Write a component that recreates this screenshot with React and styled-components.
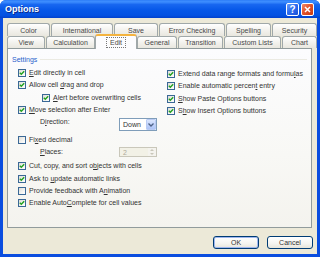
import React from 'react';
import styled, { createGlobalStyle } from 'styled-components';

const GlobalStyle = createGlobalStyle`
  body {
    margin: 0;
    font-family: "Liberation Sans", Arial, sans-serif;
    background: #ffffff;
  }
`;

const Window = styled.div`
  width: 320px;
  height: 257px;
  display: flex;
  flex-direction: column;
  background: #0a4ddf;
  border-radius: 6px 6px 0 0;
  overflow: hidden;
`;

const TitleBar = styled.div`
  height: 18px;
  flex: none;
  display: flex;
  align-items: center;
  justify-content: space-between;
  padding: 0 5px 0 5px;
  background: linear-gradient(
    to bottom,
    #2d7df7 0%,
    #3f8fff 10%,
    #1867f0 25%,
    #0758e8 55%,
    #0452e2 85%,
    #0342cc 100%
  );
`;

const TitleText = styled.span`
  color: #ffffff;
  font-weight: bold;
  font-size: 9px;
  text-shadow: 1px 1px 0 #0a2a8a;
`;

const TitleButtons = styled.div`
  display: flex;
  gap: 2px;
  margin-right: 1px;
`;

const TitleButton = styled.div`
  width: 13px;
  height: 13px;
  box-sizing: border-box;
  border: 1px solid #ffffff;
  border-radius: 2px;
  display: flex;
  align-items: center;
  justify-content: center;
  color: #ffffff;
  font-weight: bold;
  font-size: 10px;
  background: ${p =>
    p.$variant === 'close'
      ? 'linear-gradient(135deg, #f08a6a 0%, #e2542d 45%, #c8380f 100%)'
      : 'linear-gradient(135deg, #6d9ef8 0%, #2f6ef0 45%, #1a52d8 100%)'};
`;

const Body = styled.div`
  flex: 1;
  margin: 0 3px 3px 3px;
  background: #ece9d8;
  display: flex;
  flex-direction: column;
  padding: 5px 5px 5px 4px;
`;

const TabStrip = styled.div`
  display: flex;
  flex-direction: column;
`;

const TabRow = styled.div`
  display: flex;
  align-items: flex-end;
  height: ${p => p.$h}px;
`;

const Tab = styled.div`
  width: ${p => p.$w}px;
  height: 100%;
  box-sizing: border-box;
  flex: none;
  display: flex;
  align-items: center;
  justify-content: center;
  font-size: 7px;
  color: #484848;
  border: 1px solid #a0a8a9;
  border-bottom: none;
  border-radius: 3px 3px 0 0;
  margin-right: 1px;
  background: linear-gradient(to bottom, #ffffff 0%, #f3f2ee 50%, #e9e7df 100%);

  &:last-child {
    margin-right: 0;
  }
`;

const ActiveTab = styled(Tab)`
  position: relative;
  z-index: 2;
  height: 15px;
  margin: 0 0 -1px -1px;
  width: ${p => p.$w + 1}px;
  border-top: 2px solid #f4b33f;
  background: #fcfcfe;
  padding-bottom: 1px;
`;

const FocusText = styled.span`
  outline: 1px dotted #777777;
  outline-offset: 0;
  padding: 0 3px;
  line-height: 9px;
`;

const Panel = styled.div`
  height: 180px;
  box-sizing: border-box;
  border: 1px solid #919b9c;
  background: linear-gradient(to bottom, #fcfcfe 0%, #f8f8f5 60%, #f4f3ee 100%);
  padding: 5px 4px 0 4px;
  position: relative;
  z-index: 1;
`;

const GroupHeader = styled.div`
  display: flex;
  align-items: center;
  gap: 3px;
  height: 10px;
  font-size: 7px;
  color: #2a5fcc;
`;

const GroupLine = styled.div`
  flex: 1;
  height: 1px;
  background: #ebeae2;
`;

const Columns = styled.div`
  display: grid;
  grid-template-columns: 149px 1fr;
  margin: 3px 0 0 6px;
`;

const Column = styled.div`
  display: flex;
  flex-direction: column;
`;

const Row = styled.div`
  display: flex;
  align-items: ${p => (p.$top ? 'flex-start' : 'center')};
  height: ${p => p.$h}px;
  padding-left: ${p => p.$indent || 0}px;
  font-size: 7px;
  color: #333333;
  white-space: nowrap;
`;

const Text = styled.span`
  line-height: 12px;
`;

const Key = styled.span`
  text-decoration: underline;
`;

const Box = styled.span`
  width: 8px;
  height: 8px;
  box-sizing: border-box;
  flex: none;
  border: 1px solid #3a6896;
  background: linear-gradient(135deg, #dcdcd7 0%, #f4f4f1 60%, #ffffff 100%);
  margin-right: 3px;
  display: flex;
  align-items: center;
  justify-content: center;
`;

const FieldLabel = styled.span`
  width: ${p => p.$w}px;
  flex: none;
  line-height: 12px;
`;

const Select = styled.div`
  width: 38px;
  height: 13px;
  box-sizing: border-box;
  margin-top: 2px;
  border: 1px solid #7f9db9;
  background: #ffffff;
  display: flex;
  align-items: center;
  justify-content: space-between;
  padding-left: 3px;
  font-size: 7px;
  color: #333333;
`;

const DropButton = styled.span`
  width: 10px;
  height: 11px;
  box-sizing: border-box;
  border: 1px solid #b9cbf3;
  border-radius: 1px;
  background: linear-gradient(to bottom, #dbe6fd 0%, #bdd0fb 60%, #aec4f6 100%);
  display: flex;
  align-items: center;
  justify-content: center;
`;

const Spinner = styled.div`
  width: 38px;
  height: 10px;
  box-sizing: border-box;
  margin-top: 1px;
  border: 1px solid #c9c7ba;
  background: #f2f1e6;
  display: flex;
  align-items: center;
  justify-content: space-between;
  padding-left: 3px;
  font-size: 7px;
  color: #aca899;
`;

const SpinButtons = styled.span`
  width: 8px;
  height: 8px;
  display: flex;
  flex-direction: column;
  justify-content: space-between;
`;

const SpinHalf = styled.span`
  height: 4px;
  background: #f4f3ee;
  display: flex;
  align-items: center;
  justify-content: center;
`;

const Footer = styled.div`
  display: flex;
  justify-content: flex-end;
  gap: 8px;
  margin: 8px -1px 0 0;
`;

const Button = styled.div`
  width: 46px;
  height: 13px;
  box-sizing: border-box;
  border: 1px solid #003c74;
  border-radius: 3px;
  display: flex;
  align-items: center;
  justify-content: center;
  font-size: 7px;
  color: #333333;
  background: linear-gradient(to bottom, #ffffff 0%, #f4f4f0 60%, #e6e4da 100%);
  box-shadow: ${p => (p.$default ? 'inset 0 0 0 1px #9fb6ee' : 'none')};
`;

const Label = ({ text }) => {
  const i = text.indexOf('&');
  if (i < 0) return <Text>{text}</Text>;
  return (
    <Text>
      {text.slice(0, i)}
      <Key>{text[i + 1]}</Key>
      {text.slice(i + 2)}
    </Text>
  );
};

const CheckMark = () => (
  <svg width="6" height="6" viewBox="0 0 6 6">
    <path d="M0.8 2.8 L2.3 4.3 L5.2 1.2" fill="none" stroke="#21a121" strokeWidth="1.4" />
  </svg>
);

const Check = ({ label, checked, h, indent }) => (
  <Row $h={h} $indent={indent}>
    <Box>{checked && <CheckMark />}</Box>
    <Label text={label} />
  </Row>
);

const row1 = [
  ['Color', 43],
  ['International', 62],
  ['Save', 44],
  ['Error Checking', 66],
  ['Spelling', 45],
  ['Security', 45]
];

const row2 = [
  ['View', 38],
  ['Calculation', 49],
  ['Edit', 41],
  ['General', 40],
  ['Transition', 45],
  ['Custom Lists', 57],
  ['Chart', 35]
];

const App = () => {
  return (
    <>
      <GlobalStyle />
      <Window>
        <TitleBar>
          <TitleText>Options</TitleText>
          <TitleButtons>
            <TitleButton $variant="help">?</TitleButton>
            <TitleButton $variant="close">
              <svg width="7" height="7" viewBox="0 0 7 7">
                <path d="M1 1 L6 6 M6 1 L1 6" stroke="#ffffff" strokeWidth="1.5" />
              </svg>
            </TitleButton>
          </TitleButtons>
        </TitleBar>
        <Body>
          <TabStrip>
            <TabRow $h={13}>
              {row1.map(([name, w]) => (
                <Tab key={name} $w={w}>
                  {name}
                </Tab>
              ))}
            </TabRow>
            <TabRow $h={12}>
              {row2.map(([name, w]) =>
                name === 'Edit' ? (
                  <ActiveTab key={name} $w={w}>
                    <FocusText>{name}</FocusText>
                  </ActiveTab>
                ) : (
                  <Tab key={name} $w={w}>
                    {name}
                  </Tab>
                )
              )}
            </TabRow>
          </TabStrip>
          <Panel>
            <GroupHeader>
              <span>Settings</span>
              <GroupLine />
            </GroupHeader>
            <Columns>
              <Column>
                <Check h={12} checked label="&Edit directly in cell" />
                <Check h={12} checked label="Allow cell &drag and drop" />
                <Check h={13} checked indent={24} label="&Alert before overwriting cells" />
                <Check h={12} checked label="&Move selection after Enter" />
                <Row $h={17} $top $indent={22}>
                  <FieldLabel $w={79}>
                    D<Key>i</Key>rection:
                  </FieldLabel>
                  <Select>
                    Down
                    <DropButton>
                      <svg width="6" height="4" viewBox="0 0 6 4">
                        <path d="M0.5 0.5 L3 3 L5.5 0.5" fill="none" stroke="#4d6185" strokeWidth="1.3" />
                      </svg>
                    </DropButton>
                  </Select>
                </Row>
                <Check h={13} label="Fi&xed decimal" />
                <Row $h={14} $top $indent={22}>
                  <FieldLabel $w={79}>
                    <Key>P</Key>laces:
                  </FieldLabel>
                  <Spinner>
                    2
                    <SpinButtons>
                      <SpinHalf>
                        <svg width="4" height="2" viewBox="0 0 4 2">
                          <path d="M0 2 L2 0 L4 2 Z" fill="#c9c7ba" />
                        </svg>
                      </SpinHalf>
                      <SpinHalf>
                        <svg width="4" height="2" viewBox="0 0 4 2">
                          <path d="M0 0 L2 2 L4 0 Z" fill="#c9c7ba" />
                        </svg>
                      </SpinHalf>
                    </SpinButtons>
                  </Spinner>
                </Row>
                <Check h={12} checked label="Cut, copy, and sort o&bjects with cells" />
                <Check h={13} checked label="Ask to &update automatic links" />
                <Check h={12} label="Provide feedback with A&nimation" />
                <Check h={12} checked label="Enable Auto&Complete for cell values" />
              </Column>
              <Column>
                <Check h={13} checked label="Extend data range formats and formu&las" />
                <Check h={12} checked label="Enable automatic percen&t entry" />
                <Check h={13} checked label="&Show Paste Options buttons" />
                <Check h={12} checked label="S&how Insert Options buttons" />
              </Column>
            </Columns>
          </Panel>
          <Footer>
            <Button $default>OK</Button>
            <Button>Cancel</Button>
          </Footer>
        </Body>
      </Window>
    </>
  );
};

export default App;
